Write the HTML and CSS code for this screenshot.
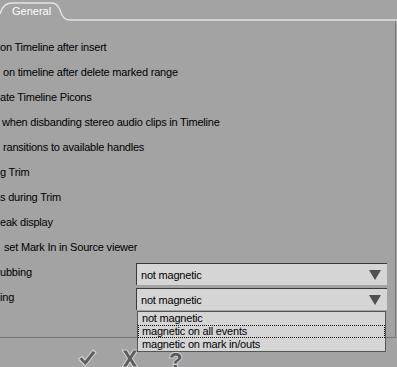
FILE: index.html
```html
<!DOCTYPE html>
<html lang="en">
<head>
  <meta charset="UTF-8">
  <title>General</title>
  <link rel="stylesheet" href="styles.css">
</head>
<body>

<div class="tabbar">
  <svg class="tab-line" width="397" height="21" viewBox="0 0 397 21">
    <path d="M0,14 C2,7 5,3 12,3 L52,3 C58,3 60,10 62,15 C64,19 66,20 70,20 L397,20" fill="none" stroke="#e4e4e4" stroke-width="1.4"/>
  </svg>
  <span class="tab-label">General</span>
</div>

<div class="panel">
  <div class="row"><span class="label">on Timeline after insert</span></div>
  <div class="row"><span class="label in3">on timeline after delete marked range</span></div>
  <div class="row"><span class="label">ate Timeline Picons</span></div>
  <div class="row"><span class="label in2">when disbanding stereo audio clips in Timeline</span></div>
  <div class="row"><span class="label in3">ransitions to available handles</span></div>
  <div class="row"><span class="label">g Trim</span></div>
  <div class="row"><span class="label">s during Trim</span></div>
  <div class="row"><span class="label">eak display</span></div>
  <div class="row"><span class="label in4">set Mark In in Source viewer</span></div>

  <div class="row">
    <span class="label wide">ubbing</span>
    <div class="combo">
      <span>not magnetic</span>
      <span class="arrow"></span>
    </div>
  </div>

  <div class="row">
    <span class="label wide">ing</span>
    <div class="combo open">
      <span>not magnetic</span>
      <span class="arrow"></span>
      <!-- liste déroulée -->
      <ul class="dropdown">
        <li>not magnetic</li>
        <li class="focus">magnetic on all events</li>
        <li>magnetic on mark in/outs</li>
      </ul>
    </div>
  </div>
</div>

<div class="buttons">
  <svg class="btn-icon check" width="20" height="20" viewBox="0 0 20 20">
    <path d="M1.5,11 L5,8.5 L8,12 L16,2 L19,4.5 L8.5,18 Z" fill="#5e5e5e" stroke="#d0d0d0" stroke-width="1.2" stroke-linejoin="round"/>
  </svg>
  <svg class="btn-icon cross" width="18" height="20" viewBox="0 0 18 20">
    <path d="M1,2 H6 L9,7 L12,2 H17 L11.5,10.5 L17,19 H12 L9,14 L6,19 H1 L6.5,10.5 Z" fill="#5e5e5e" stroke="#d0d0d0" stroke-width="1.2" stroke-linejoin="round"/>
  </svg>
  <span class="help">?</span>
</div>

<!-- pointeur de la souris -->
<svg class="cursor" width="13" height="21" viewBox="0 0 13 21">
  <path d="M0.5,0.5 L0.5,16 L4,12.5 L6.5,18.5 L8.5,17.5 L6,11.5 L11,11.5 Z" fill="#fff" stroke="#000" stroke-width="1"/>
</svg>

</body>
</html>
```

FILE: styles.css
```css
body {
  margin: 0;
  width: 397px;
  height: 367px;
  overflow: hidden;
  background-color: #a3a3a3;
  font-family: "Liberation Sans", Arial, sans-serif;
  font-size: 11px;
  letter-spacing: -0.2px;
  color: #000;
  position: relative;
}

/* Onglet */
.tabbar {
  position: relative;
  height: 21px;
}

.tab-line {
  display: block;
}

.tab-label {
  position: absolute;
  left: 12px;
  top: 5px;
  color: #fff;
  font-size: 11px;
  letter-spacing: 0;
}

/* Panneau principal */
.panel {
  width: 396px;
  height: 317px;
  box-sizing: border-box;
  border-right: 1px solid #7c7c7c;
  border-bottom: 1px solid #747474;
  padding-top: 14px;
}

.row {
  display: flex;
  align-items: flex-start;
  height: 25px;
  line-height: 25px;
  white-space: nowrap;
}

.label {
  display: block;
}

.in2 { padding-left: 2px; }
.in3 { padding-left: 3px; }
.in4 { padding-left: 4px; }

.wide {
  width: 136px;
}

/* Listes déroulantes */
.combo {
  position: relative;
  width: 251px;
  height: 22px;
  margin-top: 3px;
  box-sizing: border-box;
  background-color: #d5d5d5;
  border-top: 1px solid #3a3a3a;
  border-left: 1px solid #3a3a3a;
  line-height: 20px;
  padding-left: 4px;
  display: flex;
  justify-content: space-between;
  align-items: center;
}

.arrow {
  width: 0;
  height: 0;
  margin-right: 6px;
  border-left: 6px solid transparent;
  border-right: 6px solid transparent;
  border-top: 10px solid #505050;
}

.dropdown {
  position: absolute;
  left: 0;
  top: 22px;
  width: 249px;
  margin: 0;
  padding: 0;
  list-style: none;
  background-color: #d5d5d5;
  border: 1px solid #555;
  box-sizing: border-box;
  z-index: 2;
}

.dropdown li {
  height: 11px;
  line-height: 11px;
  padding-left: 3px;
  border: 1px dotted transparent;
}

.dropdown li.focus {
  border-color: #000;
}

/* Boutons du bas */
.buttons {
  display: flex;
  align-items: flex-start;
  gap: 24px;
  padding: 10px 0 0 77px;
}

.btn-icon {
  display: block;
}

.help {
  display: block;
  margin-left: 6px;
  margin-top: 5px;
  font-size: 22px;
  font-weight: bold;
  line-height: 16px;
  color: #5a5a5a;
  -webkit-text-stroke: 2px #d0d0d0;
  paint-order: stroke fill;
}

.cursor {
  position: absolute;
  left: 366px;
  top: 330px;
}
```
